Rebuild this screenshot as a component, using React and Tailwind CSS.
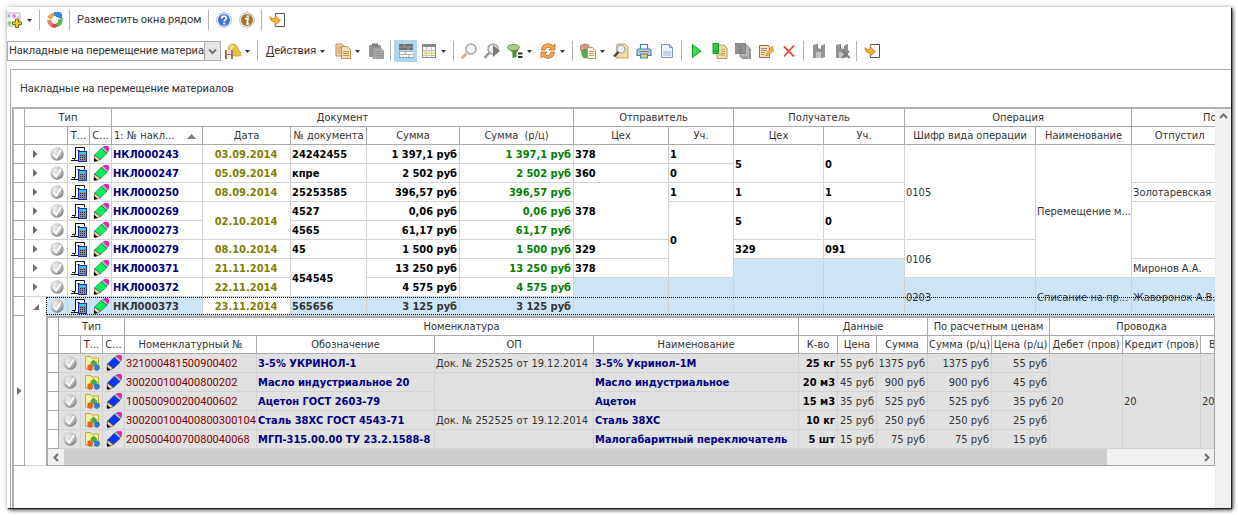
import React from "react";

/* ---------- small glyphs ---------- */

function Svg({ children, size = 16, className = "" }) {
  return (
    <svg width={size} height={size} viewBox="0 0 16 16" className={"block shrink-0 " + className} aria-hidden="true">
      {children}
    </svg>
  );
}

const Caret = () => (
  <svg width="5" height="3" viewBox="0 0 5 3" className="block" aria-hidden="true">
    <path d="M0 0h5L2.500 3z" fill="#333" />
  </svg>
);

const Chevron = ({ dir, color = "#707070" }) => {
  const d = {
    up: "M1 6l3.500-3.500L8 6",
    down: "M1 2.500L4.500 6 8 2.500",
    left: "M6 1L2.500 4.500 6 8",
    right: "M3 1l3.500 3.500L3 8",
  }[dir];
  return (
    <svg width="9" height="9" viewBox="0 0 9 9" className="block" aria-hidden="true">
      <path d={d} fill="none" stroke={color} strokeWidth="2" />
    </svg>
  );
};

/* ---------- toolbar icons ---------- */

const GalleryIcon = () => (
  <Svg>
    <rect x="-2" y="1" width="15" height="13" rx="1" fill="#f6f6f6" stroke="#b4b4b4" />
    <circle cx="7" cy="4" r="2" fill="#e58ae0" />
    <circle cx="2" cy="4" r="1.500" fill="#8fa8e8" />
    <circle cx="11" cy="5" r="1.300" fill="#b9cdf0" />
    <circle cx="2.500" cy="11" r="2" fill="#79cf74" />
    <path d="M8.500 7h3v3h3v2.500h-3v3h-3v-3h-3V10h3z" fill="#e8d21f" stroke="#6d5c0c" strokeWidth=".9" />
  </Svg>
);

const WindowsIcon = () => (
  <Svg>
    <path d="M0 5l5-4h2v3L4 8z" fill="#f0a32c" />
    <path d="M7 0h6l2 2v5l-3-1-5-2z" fill="#3b86dd" />
    <path d="M10 8l6-2-1 6-4 3-3-4z" fill="#5fbb46" />
    <path d="M4 12l4-1 3 3-3 2-4-1z" fill="#d9463e" />
    <path d="M0 8l4 0 2 4-2 3-3-3z" fill="#e7806a" />
    <path d="M5 6l3-2 3 3v3l-3 2-3-2z" fill="#fff" />
  </Svg>
);

const RoundIcon = ({ color, ring, children }) => (
  <Svg>
    <circle cx="8" cy="8" r="7.500" fill="#e6e9f2" stroke={ring} strokeWidth=".9" />
    <circle cx="8" cy="8" r="6" fill={color} />
    {children}
  </Svg>
);

const HelpIcon = () => (
  <RoundIcon color="#4273d0" ring="#b9c4dd">
    <path d="M5.800 6.400c0-3 4.600-3 4.600-.3 0 1.600-2.200 1.600-2.200 3.300" fill="none" stroke="#fff" strokeWidth="1.700" />
    <rect x="7.200" y="10.600" width="2" height="1.900" fill="#fff" />
  </RoundIcon>
);

const InfoIcon = () => (
  <RoundIcon color="#a8762a" ring="#c3c0c8">
    <rect x="7.700" y="3.300" width="2.200" height="2" fill="#fff" />
    <path d="M6 6.600h3L8 11.800h2" fill="none" stroke="#fff" strokeWidth="1.700" />
  </RoundIcon>
);

const ExitIcon = () => (
  <Svg>
    <path d="M6.500 3.500v-2h9v13h-9v-2" fill="#fff" stroke="#555" />
    <path d="M1 4.500c1 1.500 2.500 2 5 2V3.500l5.500 5L6 13.500V10C3 10 1 8 1 4.500z" fill="#f9b233" stroke="#c17f16" strokeWidth=".8" />
  </Svg>
);

const SaveViewIcon = () => (
  <Svg>
    <path d="M3 9c0-5 1-8 5-8s5 4 5.500 6l2.500 3v3H5z" fill="#efbf3e" stroke="#c8952a" strokeWidth=".7" />
    <path d="M5 4c1-2 3-2 4-1L6 8z" fill="#fbe79c" />
    <rect x="0" y="7" width="8" height="9" fill="#a77552" />
    <rect x="2" y="7" width="4" height="4" fill="#dfe3ea" />
    <rect x="2" y="12" width="4" height="4" fill="#f3f3f3" />
  </Svg>
);

const CopyIcon = () => (
  <Svg>
    <path d="M1 1h6l2 2v10H1z" fill="#f4d9a8" stroke="#b4853f" strokeWidth=".9" />
    <path d="M6.500 3.500h6l3 3v9h-9z" fill="#f7e0b4" stroke="#b4853f" strokeWidth=".9" />
    <path d="M2.500 4h4M2.500 6h3M2.500 8h3M2.500 10h3M8 8.500h6M8 10.500h6M8 12.500h6" stroke="#b98d4d" strokeWidth=".9" />
  </Svg>
);

const PasteIcon = () => (
  <Svg>
    <rect x="1" y="2" width="12" height="12" rx="1" fill="#969696" />
    <rect x="4" y="0.500" width="6" height="3" fill="#7d7d7d" />
    <path d="M5 5h7l3.500 3v7.500H5z" fill="#a9a9a9" stroke="#858585" strokeWidth=".8" />
    <path d="M7 8.500h5M7 10.500h7M7 12.500h7" stroke="#8b8b8b" strokeWidth=".8" />
  </Svg>
);

const RowsIcon = () => (
  <Svg>
    <rect x="1" y="1" width="14" height="6" fill="#6f6f6f" />
    <path d="M1 4h14M6.500 1v3M10 4v3" stroke="#a9a9a9" strokeWidth=".8" />
    <rect x="1" y="8" width="14" height="6" fill="#fafafa" />
    <path d="M1 8.500h14M1 11.500h14M1.500 8v6M7.500 8.500v3M11 11.500V14" stroke="#9a9a9a" strokeWidth=".8" />
    <path d="M1 14.500h14" stroke="#8b8b8b" strokeDasharray="2 1" />
  </Svg>
);

const TableIcon = () => (
  <Svg>
    <rect x="1.500" y="1.500" width="13" height="13" fill="#fafafa" stroke="#8b8b8b" />
    <rect x="1" y="1" width="14" height="3" fill="#888" />
    <path d="M2 7.500h12M2 12.500h12M5.500 4v10M10.500 4v10" stroke="#c4c4c4" />
    <path d="M3 10h2M6.500 10h3M11.500 10h2" stroke="#f3df52" strokeWidth="2.500" />
  </Svg>
);

const SearchIcon = () => (
  <Svg>
    <path d="M.5 15.500l5-5" stroke="#e3aa72" strokeWidth="2.500" />
    <circle cx="10" cy="6" r="5" fill="#fbfbfb" stroke="#a2a2a2" strokeWidth="1.500" />
  </Svg>
);

const SearchNextIcon = () => (
  <Svg>
    <path d="M.5 15l5-5.500" stroke="#909090" strokeWidth="2.500" />
    <circle cx="9" cy="6" r="5" fill="#ededed" stroke="#a2a2a2" strokeWidth="1.500" />
    <path d="M9 2l7 6-7 6z" fill="#7c7c7c" />
  </Svg>
);

const FilterIcon = () => (
  <Svg>
    <path d="M.5 4l5 6v5l4-1v-4l3-5.500z" fill="#4f8c3a" />
    <ellipse cx="6.500" cy="4.500" rx="6" ry="3" fill="#a8d07e" stroke="#5a9142" strokeWidth=".9" />
    <path d="M11 10.500h4.500M11 14h4.500" stroke="#333" strokeWidth="1.900" />
  </Svg>
);

const RefreshIcon = () => (
  <Svg>
    <path d="M1.500 7c0-7 9-8 11.500-4l2-2v6H9l2-2C9 4 6 4 5 7z" fill="#f4a556" stroke="#b96a22" strokeWidth=".8" />
    <path d="M14.500 9c0 7-9 8-11.500 4l-2 2V9h6l-2 2c2 2 5 2 6-2z" fill="#f4a556" stroke="#b96a22" strokeWidth=".8" />
  </Svg>
);

const ReportIcon = () => (
  <Svg>
    <path d="M0 3l4-2 5 1v5L5 9 1 8z" fill="#d79a88" stroke="#a4604e" strokeWidth=".7" />
    <path d="M2 8l4-2 3 3v5l-5 1-2-3z" fill="#5fae4c" stroke="#417f34" strokeWidth=".7" />
    <path d="M7.500 4.500h5l3 3v8h-8z" fill="#fbf3df" stroke="#a98f62" strokeWidth=".9" />
    <path d="M9 8.500h5M9 10.500h5M9 12.500h5" stroke="#b59766" strokeWidth=".9" />
  </Svg>
);

const PreviewIcon = () => (
  <Svg>
    <path d="M4 1h8l3 3v11H3z" fill="#efd9a6" stroke="#c3a15c" strokeWidth=".9" />
    <circle cx="8" cy="6" r="3.800" fill="#e9f1fb" stroke="#a8a8a8" strokeWidth="1.200" />
    <path d="M1 13.500l4.500-4.500" stroke="#444" strokeWidth="2.300" />
  </Svg>
);

const PrintIcon = () => (
  <Svg>
    <path d="M4.500 6V1.500h7V6" fill="#fff" stroke="#3b87b0" strokeWidth="1.200" />
    <path d="M2.500 6h11l1.500 1.500v5H1v-5z" fill="#c9ccd0" stroke="#3b87b0" strokeWidth="1.200" />
    <path d="M3 8.500h10" stroke="#777" />
    <path d="M4.500 11h7v4h-7z" fill="#f5c878" stroke="#3b87b0" strokeWidth="1.200" />
  </Svg>
);

const PageIcon = () => (
  <Svg>
    <path d="M2.500 1.500h8l3 3v10h-11z" fill="#eef3fb" stroke="#8593b8" />
    <path d="M10.500 1.500v3h3" fill="none" stroke="#8593b8" />
    <path d="M4 8h8v5H4z" fill="#c4d3ec" />
  </Svg>
);

const PlayIcon = () => (
  <Svg>
    <path d="M3.500 1.500L12 8l-8.500 6.500z" fill="#35e04b" stroke="#13952a" />
  </Svg>
);

const AddPageIcon = () => (
  <Svg>
    <path d="M5 2h7l3 3v10.500H5z" fill="#f0dca8" stroke="#b4904b" strokeWidth=".9" />
    <path d="M7 12h6M9 6.500h4M9 8.500h4M9 10.500h4" stroke="#c29e5c" strokeWidth=".9" />
    <rect x="1" y="0.500" width="5.500" height="10" fill="#27cf43" stroke="#128f2a" strokeWidth=".9" />
    <path d="M1.500 8h5" stroke="#128f2a" />
  </Svg>
);

const AddPagesIcon = () => (
  <Svg>
    <path d="M7 4h6l3 3v9H7z" fill="#ababab" stroke="#8a8a8a" strokeWidth=".8" />
    <path d="M5 2h7l2.500 3v9H5z" fill="#b5b5b5" stroke="#8a8a8a" strokeWidth=".8" />
    <rect x="0.500" y="0.500" width="4.500" height="10" fill="#929292" stroke="#777" strokeWidth=".8" />
    <rect x="6" y="0.500" width="4.500" height="10" fill="#929292" stroke="#777" strokeWidth=".8" />
  </Svg>
);

const EditIcon = () => (
  <Svg>
    <path d="M1.500 2.500h9l1 2v10h-10z" fill="#f3e3be" stroke="#8c744a" />
    <path d="M3 5.500h6M3 7.500h6M3 9.500h4M3 11.500h3" stroke="#977f52" strokeWidth=".9" />
    <path d="M14.500 3l1 5-5 4-3 1 2-4z" fill="#f6b740" stroke="#bc7f1c" strokeWidth=".7" />
  </Svg>
);

const DeleteIcon = () => (
  <Svg>
    <path d="M3 3.500l10 10M13 2.500l-10 11" stroke="#e04838" strokeWidth="1.800" />
  </Svg>
);

const DisketteIcon = ({ cross }) => (
  <Svg>
    <path d="M2 2l4-1v4l5 1V2l3-1v13l-3 1H2z" fill="#949494" />
    <path d="M5 9h5v6H5z" fill="#c2c2c2" />
    <path d="M6.500 1v5M10.500 3v5" stroke="#7e7e7e" />
    {cross && <path d="M8 8l8 7M15 8l-7 7" stroke="#7c7c7c" strokeWidth="2" />}
  </Svg>
);

/* ---------- row icons ---------- */

const StatusIcon = () => (
  <Svg className="mx-auto">
    <defs>
      <radialGradient id="ball" cx=".35" cy=".3" r=".8">
        <stop offset="0" stopColor="#f0f0f0" />
        <stop offset=".6" stopColor="#bababa" />
        <stop offset="1" stopColor="#6f6f6f" />
      </radialGradient>
    </defs>
    <circle cx="8" cy="8" r="6.700" fill="url(#ball)" />
    <path d="M4.500 8l2.700 3.500L12 4" fill="none" stroke="#fff" strokeWidth="1.900" />
  </Svg>
);

const InvoiceIcon = () => (
  <Svg className="mx-auto">
    <path d="M5 2h9v3H7v9H4z" fill="#fff" />
    <path d="M4 1.500h9.500v3M4.500 1.500v10M6.500 4.500h2" fill="none" stroke="#111" />
    <path d="M4.500 11c0 1.500-.5 2.500-2 3.500M0 14.500h7M1 12.500h3" fill="none" stroke="#111" />
    <rect x="7.500" y="5.500" width="8" height="10" fill="#8f8f8f" stroke="#1a2ab0" />
    <rect x="8" y="6" width="7" height="2" fill="#18d8e8" />
    <path d="M9 9.500h6M9 11.500h6M9 13.500h6" stroke="#2a2a2a" strokeDasharray="1 1" />
  </Svg>
);

const PencilIcon = ({ color }) => (
  <Svg className="mx-auto">
    <path d="M10.500 1l1.500-1h2.500L16 1.500V4l-1 1.500z" fill="#fb17c0" stroke="#fb17c0" strokeWidth=".6" />
    <path d="M8.500 2.500l2-1.500L15 5.500l-1.500 2z" fill="#b9b9c6" stroke="#444" strokeWidth=".6" />
    <path d="M8 2.500L14 7.500 7.500 13.500 1.500 9z" fill={color} stroke="#1c3a2a" strokeWidth=".5" />
    <path d="M1.500 9l6 4.500-3.500 1.500H1z" fill="#f6cf9f" stroke="#222" strokeWidth=".5" />
    <path d="M1 11.800l3.500 3.200-3.500.8z" fill="#000" />
  </Svg>
);

const FolderIcon = () => (
  <Svg className="mx-auto">
    <path d="M1.500 3V1.500h5l1 1.500h7v11h-13z" fill="#f8f09a" stroke="#b3a72c" strokeWidth=".9" />
    <path d="M9.500 4.500l4 3.500-3.500 3.500-4-3.500z" fill="#4aa840" />
    <path d="M3.500 10l4-1 2 3-2 4-4-1z" fill="#e2602c" />
    <path d="M12 9l3.500 1.500.5 3-2.500 2.500-3-1-.5-4z" fill="#2f79cf" />
  </Svg>
);

const RowArrow = () => (
  <svg width="5" height="8" viewBox="0 0 5 8" className="mx-auto block" aria-hidden="true">
    <path d="M0 0l4.500 4L0 8z" fill="#6e6e6e" />
  </svg>
);

const OpenArrow = () => (
  <svg width="6" height="6" viewBox="0 0 6 6" className="mx-auto block" aria-hidden="true">
    <path d="M6 0v6H0z" fill="#6e6e6e" />
  </svg>
);

/* ---------- toolbars ---------- */

const Tool = ({ label, active, children }) => (
  <button
    type="button"
    aria-label={label}
    className={"flex h-[22px] w-[23px] shrink-0 items-center justify-center " + (active ? "bg-[#aed6f1]" : "")}
  >
    {children}
  </button>
);

const Drop = ({ label }) => (
  <button type="button" aria-label={label} className="flex h-[22px] w-2.5 shrink-0 items-center pl-px">
    <Caret />
  </button>
);

const Sep = () => <span className="mx-[3px] h-5 w-px shrink-0 bg-[#b4b4b4]" />;

function TopBar() {
  return (
    <div className="flex h-[26px] items-center overflow-hidden">
      <button type="button" aria-label="Галерея" className="flex h-[22px] w-[19px] shrink-0 items-center">
        <GalleryIcon />
      </button>
      <Drop label="Галерея: меню" />
      <Sep />
      <Tool label="Окна"><WindowsIcon /></Tool>
      <Sep />
      <button type="button" className="px-1">Разместить окна рядом</button>
      <Sep />
      <Tool label="Справка"><HelpIcon /></Tool>
      <Tool label="О программе"><InfoIcon /></Tool>
      <Sep />
      <Tool label="Выход"><ExitIcon /></Tool>
    </div>
  );
}

function ActionBar() {
  return (
    <div className="flex h-9 items-center overflow-hidden">
      <label className="flex h-5 w-[214px] shrink-0 border border-[#ababab]">
        <select aria-label="Представление" className="min-w-0 flex-1 appearance-none truncate bg-white pl-px text-clip outline-none">
          <option>Накладные на перемещение материалов</option>
        </select>
        <span className="flex w-4 shrink-0 items-center justify-center border-l border-[#ababab] bg-[#e6e6e6]">
          <Chevron dir="down" />
        </span>
      </label>
      <Tool label="Сохранить представление"><SaveViewIcon /></Tool>
      <Drop label="Сохранить: меню" />
      <Sep />
      <button type="button" className="flex w-16 shrink-0 items-center justify-between pl-[5px]">
        <span><span className="underline underline-offset-2">Д</span>ействия</span>
        <Caret />
      </button>
      <span className="w-1.5 shrink-0" />
      <Tool label="Копировать"><CopyIcon /></Tool>
      <Drop label="Копировать: меню" />
      <Tool label="Вставить"><PasteIcon /></Tool>
      <Sep />
      <Tool label="Объединять ячейки" active><RowsIcon /></Tool>
      <Tool label="Таблица"><TableIcon /></Tool>
      <Drop label="Таблица: меню" />
      <Sep />
      <Tool label="Найти"><SearchIcon /></Tool>
      <Tool label="Найти далее"><SearchNextIcon /></Tool>
      <Tool label="Фильтр"><FilterIcon /></Tool>
      <Drop label="Фильтр: меню" />
      <Tool label="Обновить"><RefreshIcon /></Tool>
      <Drop label="Обновить: меню" />
      <Sep />
      <Tool label="Отчёты"><ReportIcon /></Tool>
      <Drop label="Отчёты: меню" />
      <Tool label="Просмотр"><PreviewIcon /></Tool>
      <Tool label="Печать"><PrintIcon /></Tool>
      <Tool label="Страница"><PageIcon /></Tool>
      <Sep />
      <Tool label="Выполнить"><PlayIcon /></Tool>
      <Tool label="Добавить"><AddPageIcon /></Tool>
      <Tool label="Добавить несколько"><AddPagesIcon /></Tool>
      <Tool label="Изменить"><EditIcon /></Tool>
      <Tool label="Удалить"><DeleteIcon /></Tool>
      <Sep />
      <Tool label="Сохранить"><DisketteIcon /></Tool>
      <Tool label="Отменить изменения"><DisketteIcon cross /></Tool>
      <Sep />
      <Tool label="Закрыть"><ExitIcon /></Tool>
    </div>
  );
}

/* ---------- grids ---------- */

const HEAD = "h-[18px] overflow-hidden whitespace-nowrap border-r border-b border-[#a9a9a9] bg-white px-0 pt-px pb-0 text-center font-normal leading-4";
const MARK = "h-[19px] border-r border-b border-[#a9a9a9] bg-white p-0";
const CELL = "h-[19px] overflow-hidden whitespace-nowrap border-r border-b border-[#d3d3d3] pt-0.5 pr-0.5 pb-0 pl-px leading-4";
const BARE = "h-[19px] overflow-hidden border-b border-[#d3d3d3] p-0";
const BLUE = " bg-[#cde6f7]";

const Cols = ({ widths }) => (
  <colgroup>
    {widths.map((w, i) => (
      <col key={i} style={{ width: w }} />
    ))}
  </colgroup>
);

const DOC_WIDTHS = [11, 21, 22, 22, 22, 91, 88, 76, 93, 114, 95, 65, 90, 81, 131, 96, 96];

/* Merged columns hold [text, rowSpan, highlighted] on the first row of each span. */
const DOCS = [
  { no: "НКЛ000243", date: ["03.09.2014", 1], doc: ["24242455", 1], sum: "1 397,1 руб", from: ["378", 1], fromU: ["1", 1], to: ["5", 2], toU: ["0", 2], code: ["0105", 5], name: ["Перемещение м...", 7], who: ["", 2] },
  { no: "НКЛ000247", date: ["05.09.2014", 1], doc: ["кпре", 1], sum: "2 502 руб", from: ["360", 1], fromU: ["0", 1] },
  { no: "НКЛ000250", date: ["08.09.2014", 1], doc: ["25253585", 1], sum: "396,57 руб", from: ["378", 3], fromU: ["1", 1], to: ["1", 1], toU: ["1", 1], who: ["Золотаревская", 1] },
  { no: "НКЛ000269", date: ["02.10.2014", 2], doc: ["4527", 1], sum: "0,06 руб", fromU: ["0", 4], to: ["5", 2], toU: ["0", 2], who: ["", 3] },
  { no: "НКЛ000273", doc: ["4565", 1], sum: "61,17 руб" },
  { no: "НКЛ000279", date: ["08.10.2014", 1], doc: ["45", 1], sum: "1 500 руб", from: ["329", 1], to: ["329", 1], toU: ["091", 1], code: ["0106", 2] },
  { no: "НКЛ000371", date: ["21.11.2014", 1], doc: ["454545", 2], sum: "13 250 руб", from: ["378", 1], to: ["", 3, true], toU: ["", 3, true], who: ["Миронов А.А.", 1] },
  { no: "НКЛ000372", date: ["22.11.2014", 1], sum: "4 575 руб", from: ["", 2, true], fromU: ["", 2, true], code: ["0203", 2, true], name: ["Списание на пр...", 2, true], who: ["Жаворонок А.В.", 2, true] },
  { no: "НКЛ000373", date: ["23.11.2014", 1], doc: ["565656", 1, true], sum: "3 125 руб", selected: true },
];

const Merged = ({ cell, className = "" }) =>
  cell ? (
    <td rowSpan={cell[1]} className={CELL + (cell[2] ? BLUE : "") + " " + className}>
      {cell[0]}
    </td>
  ) : null;

function DocRow({ row }) {
  const sel = row.selected;
  const bg = sel ? BLUE : "";
  return (
    <tr className="relative">
      <td className={MARK} />
      <td className={BARE + (sel ? " border-b-0" : "")}>
        <button type="button" aria-label={sel ? "Свернуть" : "Развернуть"} className="block w-full">
          {sel ? <OpenArrow /> : <RowArrow />}
        </button>
      </td>
      <td className={BARE + " border-r" + bg}>
        <StatusIcon />
        {sel && <span className="pointer-events-none absolute top-0 right-0 left-8 h-[18px] border border-dotted border-black" />}
      </td>
      <td className={BARE + " border-r" + bg}><InvoiceIcon /></td>
      <td className={BARE + " border-r" + bg}><PencilIcon color="#00f25c" /></td>
      <td className={CELL + " font-bold " + (sel ? "bg-[#cde6f7]" : "text-[#000080]")}>{row.no}</td>
      <Merged cell={row.date} className="text-center font-bold text-[#808000]" />
      <Merged cell={row.doc} className={"font-bold " + (sel ? "" : "text-black")} />
      <td className={CELL + " text-right font-bold " + (sel ? "bg-[#cde6f7]" : "text-black")}>{row.sum}</td>
      <td className={CELL + " text-right font-bold " + (sel ? "bg-[#cde6f7]" : "text-[#008000]")}>{row.sum}</td>
      <Merged cell={row.from} className="font-bold text-black" />
      <Merged cell={row.fromU} className="font-bold text-black" />
      <Merged cell={row.to} className="font-bold text-black" />
      <Merged cell={row.toU} className="font-bold text-black" />
      <Merged cell={row.code} />
      <Merged cell={row.name} />
      <Merged cell={row.who} />
    </tr>
  );
}

function DocTable() {
  return (
    <table className="w-[1214px] table-fixed border-separate border-spacing-0">
      <Cols widths={DOC_WIDTHS} />
      <thead>
        <tr>
          <th rowSpan={2} className={HEAD} />
          <th colSpan={4} className={HEAD}>Тип</th>
          <th colSpan={5} className={HEAD}>Документ</th>
          <th colSpan={2} className={HEAD}>Отправитель</th>
          <th colSpan={2} className={HEAD}>Получатель</th>
          <th colSpan={2} className={HEAD}>Операция</th>
          <th className={HEAD + " pl-[71px] text-left"}>По</th>
        </tr>
        <tr>
          <th colSpan={2} className={HEAD} />
          <th className={HEAD}>Т...</th>
          <th className={HEAD}>С...</th>
          <th className={HEAD}>
            <span className="flex items-center justify-between pr-1.5 pl-0.5">
              1: № накл...
              <svg width="9" height="5" viewBox="0 0 9 5" aria-hidden="true"><path d="M4.500 0L9 5H0z" fill="#7b7b7b" /></svg>
            </span>
          </th>
          <th className={HEAD}>Дата</th>
          <th className={HEAD}>№ документа</th>
          <th className={HEAD}>Сумма</th>
          <th className={HEAD}>Сумма&nbsp; (р/ц)</th>
          <th className={HEAD}>Цех</th>
          <th className={HEAD}>Уч.</th>
          <th className={HEAD}>Цех</th>
          <th className={HEAD}>Уч.</th>
          <th className={HEAD}>Шифр вида операции</th>
          <th className={HEAD}>Наименование</th>
          <th className={HEAD}>Отпустил</th>
        </tr>
      </thead>
      <tbody>
        {DOCS.map((r) => (
          <DocRow key={r.no} row={r} />
        ))}
      </tbody>
    </table>
  );
}

const ITEM_WIDTHS = [11, 22, 22, 22, 132, 178, 159, 205, 39, 39, 51, 64, 58, 73, 78, 33];

const ITEMS = [
  { code: "321000481500900402", mark: "3-5% УКРИНОЛ-1", op: ["Док. № 252525 от 19.12.2014", 1], name: "3-5% Укринол-1М", qty: "25 кг", price: "55 руб", sum: "1375 руб" },
  { code: "300200100400800202", mark: "Масло индустриальное 20", op: ["", 2], name: "Масло индустриальное", qty: "20 м3", price: "45 руб", sum: "900 руб" },
  { code: "100500900200400602", mark: "Ацетон ГОСТ 2603-79", name: "Ацетон", qty: "15 м3", price: "35 руб", sum: "525 руб" },
  { code: "300200100400800300104", mark: "Сталь 38ХС ГОСТ 4543-71", op: ["Док. № 252525 от 19.12.2014", 1], name: "Сталь 38ХС", qty: "10 кг", price: "25 руб", sum: "250 руб" },
  { code: "20050040070080040068", mark: "МГП-315.00.00 ТУ 23.2.1588-8", op: ["", 1], name: "Малогабаритный переключатель", qty: "5 шт", price: "15 руб", sum: "75 руб" },
];

function ItemTable() {
  return (
    <table className="w-[1186px] table-fixed border-separate border-spacing-0">
      <Cols widths={ITEM_WIDTHS} />
      <thead>
        <tr>
          <th rowSpan={2} className={HEAD} />
          <th colSpan={3} className={HEAD}>Тип</th>
          <th colSpan={4} className={HEAD}>Номенклатура</th>
          <th colSpan={3} className={HEAD}>Данные</th>
          <th colSpan={2} className={HEAD}>По расчетным ценам</th>
          <th colSpan={3} className={HEAD}>Проводка</th>
        </tr>
        <tr>
          <th className={HEAD} />
          <th className={HEAD}>Т...</th>
          <th className={HEAD}>С...</th>
          <th className={HEAD}>Номенклатурный №</th>
          <th className={HEAD}>Обозначение</th>
          <th className={HEAD}>ОП</th>
          <th className={HEAD}>Наименование</th>
          <th className={HEAD}>К-во</th>
          <th className={HEAD}>Цена</th>
          <th className={HEAD}>Сумма</th>
          <th className={HEAD}>Сумма (р/ц)</th>
          <th className={HEAD}>Цена (р/ц)</th>
          <th className={HEAD}>Дебет (пров)</th>
          <th className={HEAD}>Кредит (пров)</th>
          <th className={HEAD + " pl-2 text-left"}>В</th>
        </tr>
      </thead>
      <tbody className="bg-[#e1e1e1]">
        {ITEMS.map((r, i) => (
          <tr key={r.code}>
            <td className={MARK} />
            <td className={BARE + " border-r"}><StatusIcon /></td>
            <td className={BARE + " border-r"}><FolderIcon /></td>
            <td className={BARE + " border-r"}><PencilIcon color="#0a35ff" /></td>
            <td className={CELL + " font-['Roboto',sans-serif] text-[#800000]"}>{r.code}</td>
            <td className={CELL + " font-bold text-[#000080]"}>{r.mark}</td>
            <Merged cell={r.op} />
            <td className={CELL + " font-bold text-[#000080]"}>{r.name}</td>
            <td className={CELL + " text-right font-bold text-black"}>{r.qty}</td>
            <td className={CELL + " text-right"}>{r.price}</td>
            <td className={CELL + " text-right"}>{r.sum}</td>
            <td className={CELL + " text-right"}>{r.sum}</td>
            <td className={CELL + " text-right"}>{r.price}</td>
            {i === 0 && [0, 1, 2].map((k) => <Merged key={k} cell={["20", ITEMS.length]} />)}
          </tr>
        ))}
      </tbody>
    </table>
  );
}

function Detail() {
  return (
    <div className="flex">
      <div className="flex w-[11px] shrink-0 items-center border-r border-b border-[#a9a9a9]">
        <RowArrow />
      </div>
      <div className="w-[21px] shrink-0 border-b border-[#d3d3d3]" />
      <div className="min-w-0 flex-1 border-t-2 border-r border-b border-l-2 border-[#a9a9a9]">
        <div className="overflow-hidden">
          <ItemTable />
        </div>
        <div className="flex h-4 bg-[#f0f0f0]">
          <button type="button" aria-label="Прокрутить влево" className="flex w-4 items-center justify-center">
            <Chevron dir="left" />
          </button>
          <div className="flex-1">
            <div className="h-full w-[92%] bg-[#cdcdcd]" />
          </div>
          <button type="button" aria-label="Прокрутить вправо" className="flex w-4 items-center justify-center">
            <Chevron dir="right" />
          </button>
        </div>
      </div>
    </div>
  );
}

export default function App() {
  return (
    <div className="flex min-h-screen bg-white pt-[7px] pr-[7px] pb-[7px] pl-[7px] font-['DejaVu_Sans_Condensed','DejaVu_Sans',sans-serif] text-[11px] leading-4 text-[#333]">
      <main className="flex min-w-0 flex-1 flex-col overflow-hidden bg-white shadow-[1px_1px_1px_#222,2px_2px_4px_#444,0_0_6px_rgba(0,0,0,0.2)]">
        <div className="font-['Roboto',sans-serif]">
          <TopBar />
          <ActionBar />
        </div>
        <section className="ml-[3px] flex flex-1 flex-col border-t border-l border-[#ababab] pl-px">
          <h1 className="flex h-[37px] items-center pl-2 font-['Roboto',sans-serif]">Накладные на перемещение материалов</h1>
          <div className="flex flex-1 border-t-2 border-[#b0b0b0]">
            <div className="min-w-0 flex-1 border-l-2 border-[#b0b0b0]">
              <div className="overflow-hidden">
                <DocTable />
              </div>
              <Detail />
            </div>
            <div className="w-4 shrink-0 bg-[#f0f0f0]">
              <button type="button" aria-label="Прокрутить вверх" className="flex h-[15px] w-full items-center justify-center">
                <Chevron dir="up" />
              </button>
            </div>
          </div>
        </section>
      </main>
    </div>
  );
}
